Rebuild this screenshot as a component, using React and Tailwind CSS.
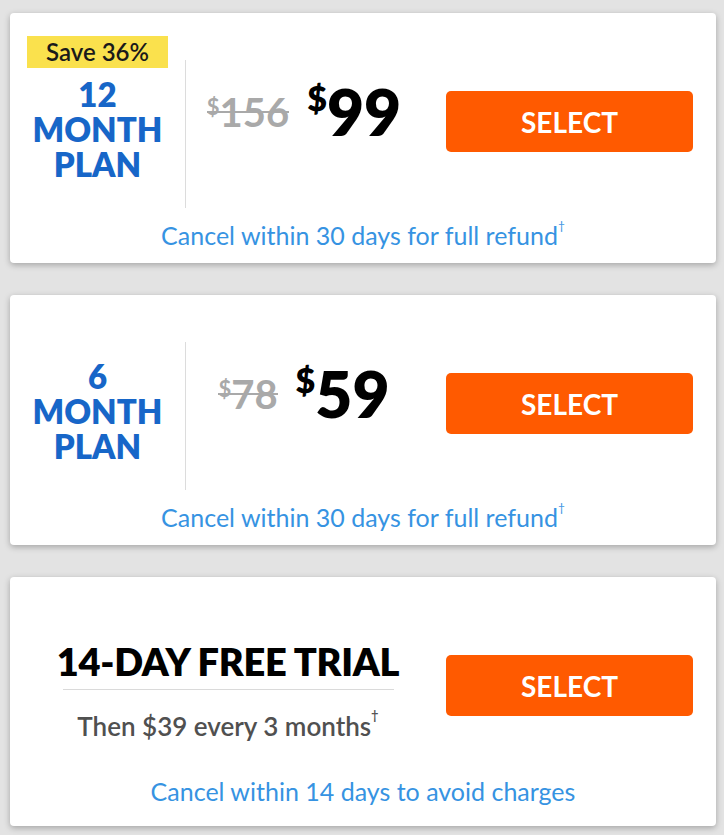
import React from 'react';

const plans = [
  { id: 12, badge: 'Save 36%', months: '12', oldPrice: '156', price: '99' },
  { id: 6, badge: null, months: '6', oldPrice: '78', price: '59' },
];

function SelectButton() {
  return (
    <button className="w-[247px] h-[61px] rounded-[5px] bg-[#ff5a00] text-white text-[28px] font-bold flex items-center justify-center">
      SELECT
    </button>
  );
}

function PlanCard({ plan }) {
  return (
    <div className="relative h-[250px] bg-white rounded-[4px] shadow-[0_2px_6px_rgba(0,0,0,0.28)] flex flex-col">
      {plan.badge && (
        <div className="absolute left-[17px] top-[23px] w-[141px] h-[32px] bg-[#fae14d] flex items-center justify-center text-[24px] font-semibold text-[#1a1a1a]">
          {plan.badge}
        </div>
      )}
      <div className="flex h-[208px]">
        {/* plan name */}
        <div className="w-[175px] pt-[64px] flex flex-col items-center text-[#1766c8] text-[33px] font-extrabold leading-[35px]">
          <span>{plan.months}</span>
          <span>MONTH</span>
          <span>PLAN</span>
        </div>
        <div className="mt-[47px] h-[148px] w-px bg-[#dcdcdc]" />
        {/* prices */}
        <div className="flex-1 flex items-start justify-center pt-[74px]">
          <div className="flex items-center gap-[18px]">
            <span className="relative flex items-start text-[#a9a9a9] font-bold">
              <span className="text-[22px] leading-[22px] mt-[1px]">$</span>
              <span className="text-[40px] leading-[34px]">{plan.oldPrice}</span>
              <span className="absolute left-0 right-0 top-[16px] h-[2px] bg-[#a9a9a9]" />
            </span>
            <span className="flex items-start text-black font-extrabold">
              <span className="text-[34px] leading-[34px] mt-[-6px]">$</span>
              <span className="text-[64px] leading-[50px]">{plan.price}</span>
            </span>
          </div>
        </div>
        <div className="pt-[78px] pr-[23px] pl-[24px]">
          <SelectButton />
        </div>
      </div>
      <p className="text-center text-[25px] text-[#3693e2] leading-[28px]">
        Cancel within 30 days for full refund<sup className="text-[12px] align-super">†</sup>
      </p>
    </div>
  );
}

function TrialCard() {
  return (
    <div className="h-[249px] bg-white rounded-[4px] shadow-[0_2px_6px_rgba(0,0,0,0.28)] flex flex-col">
      <div className="flex h-[200px]">
        <div className="w-[436px] pt-[64px] flex flex-col items-center">
          <h2 className="text-[38px] font-extrabold text-black leading-[40px] tracking-[-0.3px]">14-DAY FREE TRIAL</h2>
          <div className="mt-[8px] w-[331px] h-px bg-[#dadada]" />
          <p className="mt-[21px] text-[26px] font-semibold text-[#505050] leading-[30px]">
            Then $39 every 3 months<sup className="text-[13px] align-super">†</sup>
          </p>
        </div>
        <div className="pt-[78px] pr-[23px]">
          <SelectButton />
        </div>
      </div>
      <p className="text-center text-[25px] text-[#3693e2] leading-[28px]">
        Cancel within 14 days to avoid charges
      </p>
    </div>
  );
}

export default function App() {
  return (
    <div className="min-h-[835px] bg-[#e3e3e3] pt-[13px] pl-[10px] pr-[8px] pb-[12px] flex flex-col gap-[32px] font-['Lato',sans-serif]">
      {plans.map(plan => <PlanCard key={plan.id} plan={plan} />)}
      <TrialCard />
    </div>
  );
}
